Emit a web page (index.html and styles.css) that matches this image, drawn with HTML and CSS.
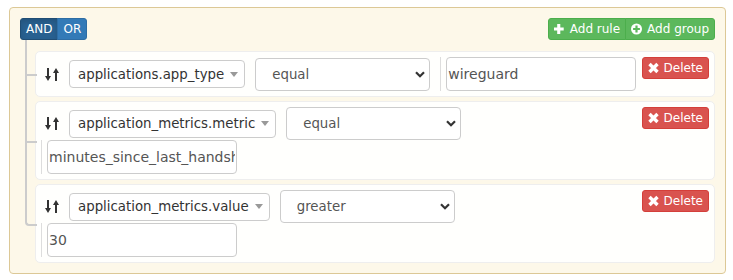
FILE: index.html
```html
<!DOCTYPE html>
<html>
<head>
<meta charset="utf-8">
<link rel="stylesheet" href="styles.css">
</head>
<body>
<div class="query-builder">
  <div class="group">
    <div class="group-header">
      <div class="btn-group">
        <button class="btn btn-primary active">AND</button>
        <button class="btn btn-primary">OR</button>
      </div>
      <div class="btn-group">
        <button class="btn btn-success"><svg class="ico" width="12" height="12" viewBox="0 0 12 12"><path d="M3.2 1h3.1v3.4h3.4v3.1H6.3v3.4H3.2V7.5H-0.2V4.4h3.4z" fill="#fff"/></svg>Add rule</button>
        <button class="btn btn-success"><svg class="ico" width="12" height="12" viewBox="0 0 12 12"><circle cx="5.5" cy="6" r="5.5" fill="#fff"/><path d="M4.4 2.6h2.2v2.3h2.3v2.2H6.6v2.3H4.4V7.1H2.1V4.9h2.3z" fill="#5cb85c"/></svg>Add group</button>
      </div>
    </div>
    <ul class="rules-list">
      <li class="rule">
        <div class="rule-body">
          <span class="drag-handle"><svg width="14" height="13" viewBox="0 0 14 13"><path d="M2 0h2v8h2l-3 5-3-5h2z M10 13h2V5h2l-3-5-3 5h2z" fill="#333"/></svg></span>
          <div class="picker"><span class="picker-text">applications.app_type</span><span class="caret"></span></div>
          <div class="select"><span>equal</span><svg class="chev" width="10" height="7" viewBox="0 0 10 7"><path d="M1 1.2l4 4 4-4" fill="none" stroke="#333" stroke-width="2.2"/></svg></div>
          <div class="value"><input class="input" type="text" value="wireguard"></div>
        </div>
        <button class="btn btn-danger"><svg class="ico" width="12" height="12" viewBox="0 0 12 12"><path d="M1.5 2l8 8M9.5 2l-8 8" stroke="#fff" stroke-width="3.4"/></svg>Delete</button>
      </li>
      <li class="rule">
        <div class="rule-body">
          <span class="drag-handle"><svg width="14" height="13" viewBox="0 0 14 13"><path d="M2 0h2v8h2l-3 5-3-5h2z M10 13h2V5h2l-3-5-3 5h2z" fill="#333"/></svg></span>
          <div class="picker"><span class="picker-text">application_metrics.metric</span><span class="caret"></span></div>
          <div class="select"><span>equal</span><svg class="chev" width="10" height="7" viewBox="0 0 10 7"><path d="M1 1.2l4 4 4-4" fill="none" stroke="#333" stroke-width="2.2"/></svg></div>
          <div class="value"><input class="input" type="text" value="minutes_since_last_handshake"></div>
        </div>
        <button class="btn btn-danger"><svg class="ico" width="12" height="12" viewBox="0 0 12 12"><path d="M1.5 2l8 8M9.5 2l-8 8" stroke="#fff" stroke-width="3.4"/></svg>Delete</button>
      </li>
      <li class="rule">
        <div class="rule-body">
          <span class="drag-handle"><svg width="14" height="13" viewBox="0 0 14 13"><path d="M2 0h2v8h2l-3 5-3-5h2z M10 13h2V5h2l-3-5-3 5h2z" fill="#333"/></svg></span>
          <div class="picker"><span class="picker-text">application_metrics.value</span><span class="caret"></span></div>
          <div class="select"><span>greater</span><svg class="chev" width="10" height="7" viewBox="0 0 10 7"><path d="M1 1.2l4 4 4-4" fill="none" stroke="#333" stroke-width="2.2"/></svg></div>
          <div class="value"><input class="input" type="text" value="30"></div>
        </div>
        <button class="btn btn-danger"><svg class="ico" width="12" height="12" viewBox="0 0 12 12"><path d="M1.5 2l8 8M9.5 2l-8 8" stroke="#fff" stroke-width="3.4"/></svg>Delete</button>
      </li>
    </ul>
  </div>
</div>
</body>
</html>
```
FILE: styles.css
```css
* { box-sizing: border-box; }
body {
  margin: 7px 7px 0 9px;
  font-family: "DejaVu Sans", Verdana, sans-serif;
  color: #333;
  background: #fff;
}
.group {
  border: 1px solid #dcc896;
  border-radius: 4px;
  background: #fdf8e9;
  padding: 10px 10px 6px 10px;
}
.group-header {
  display: flex;
  justify-content: space-between;
  align-items: center;
  margin-bottom: 11px;
  position: relative;
  z-index: 1;
}
.btn-group { display: flex; }
.btn {
  font-family: "DejaVu Sans", Verdana, sans-serif;
  font-size: 12px;
  line-height: 18px;
  height: 22px;
  padding: 1px 5px;
  border: 1px solid transparent;
  border-radius: 3px;
  color: #fff;
  display: inline-flex;
  align-items: center;
  white-space: nowrap;
  margin: 0;
}
.btn-group .btn + .btn { border-top-left-radius: 0; border-bottom-left-radius: 0; margin-left: -1px; }
.btn-group .btn:first-child:not(:last-child) { border-top-right-radius: 0; border-bottom-right-radius: 0; }
.btn-primary { background: #337ab7; border-color: #2e6da4; }
.btn-primary.active { background: #286090; border-color: #204d74; box-shadow: inset 0 3px 5px rgba(0,0,0,.125); }
.btn-success { background: #5cb85c; border-color: #4cae4c; }
.btn-danger { background: #d9534f; border-color: #d43f3a; }
.ico { margin-right: 4px; flex: none; }

.rules-list {
  list-style: none;
  margin: 0;
  padding: 0 0 4px 15px;
  display: flex;
  flex-direction: column;
  gap: 4px;
}
.rule {
  position: relative;
  display: flex;
  align-items: flex-start;
  border: 1px solid #eee;
  border-radius: 5px;
  background: rgba(255,255,255,.9);
  padding: 5px;
}
.rule::before, .rule::after {
  content: '';
  position: absolute;
  left: -11px;
  width: 10px;
  border-color: #ccc;
  border-style: solid;
}
.rule::before {
  top: -5px;
  height: calc(50% + 5px);
  border-width: 0 0 2px 2px;
}
.rule::after {
  top: 50%;
  height: calc(50% + 5px);
  border-width: 0 0 0 2px;
}
.rule:first-child::before { top: -12px; height: calc(50% + 12px); }
.rule:last-child::before { border-radius: 0 0 0 4px; }
.rule:last-child::after { display: none; }

.rule-body {
  flex: 1;
  display: flex;
  flex-wrap: wrap;
  align-items: center;
  column-gap: 10px;
}
.drag-handle {
  display: flex;
  margin-left: 4px;
  width: 14px;
}
.picker {
  height: 28px;
  display: flex;
  align-items: center;
  border: 1px solid #ccc;
  border-radius: 4px;
  background: #fff;
  padding: 0 6px 0 8px;
  font-size: 13.33px;
  color: #333;
  white-space: nowrap;
}
.caret {
  width: 0;
  height: 0;
  margin-left: 6px;
  border-top: 5px solid #999;
  border-left: 4.5px solid transparent;
  border-right: 4.5px solid transparent;
}
.select {
  width: 175px;
  height: 33px;
  display: flex;
  align-items: center;
  justify-content: space-between;
  border: 1px solid #ccc;
  border-radius: 4px;
  background: #fff;
  padding: 0 4px 0 16px;
  font-size: 13.33px;
  color: #555;
}
.chev { flex: none; }
.value {
  border-left: 1px solid #ddd;
  padding-left: 5px;
  display: flex;
}
.input {
  width: 190px;
  height: 34px;
  border: 1px solid #ccc;
  border-radius: 4px;
  padding: 0 1px;
  font-family: "DejaVu Sans", Verdana, sans-serif;
  font-size: 14px;
  color: #555;
  background: #fff;
  margin: 0;
  outline: none;
}
.rule > .btn-danger { margin-left: 1px; }
```
